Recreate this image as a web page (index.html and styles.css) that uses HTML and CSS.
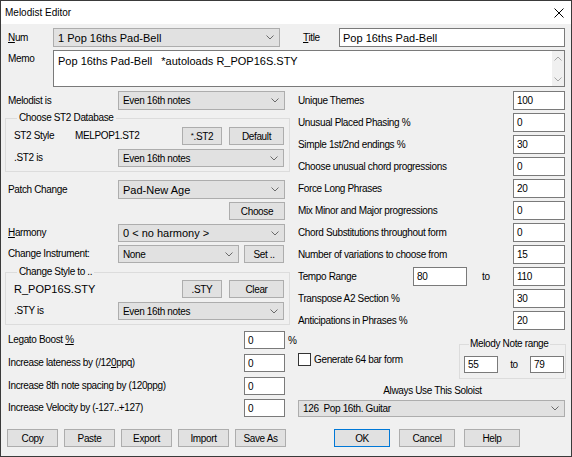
FILE: index.html
```html
<!DOCTYPE html>
<html>
<head>
<meta charset="utf-8">
<link rel="stylesheet" href="styles.css">
</head>
<body>
<div class="window">
  <div class="titlebar">
    <span class="title-text">Melodist Editor</span>
    <svg class="close" width="10" height="10" viewBox="0 0 10 10"><path d="M0.5 0.5 L9.5 9.5 M9.5 0.5 L0.5 9.5" stroke="#000" stroke-width="1" fill="none"/></svg>
  </div>
  <div class="content">
    <div class="row top-row">
      <span class="lbl lbl-num"><u>N</u>um</span>
      <div class="combo w-num big"><span>1 Pop 16ths Pad-Bell</span><svg class="chev" width="8" height="5" viewBox="0 0 8 5"><path d="M0.5 0.5 L4 4 L7.5 0.5" fill="none" stroke="#6a6a6a"/></svg></div>
      <span class="lbl lbl-title"><u>T</u>itle</span>
      <div class="input big grow">Pop 16ths Pad-Bell</div>
    </div>
    <div class="row memo-row">
      <span class="lbl lbl-num lbl-memo">Memo</span>
      <div class="memo big">
        <div class="memo-text">Pop 16ths Pad-Bell &nbsp;&nbsp;*autoloads R_POP16S.STY</div>
        <div class="vscroll">
          <svg width="8" height="5" viewBox="0 0 8 5"><path d="M0.5 4.5 L4 1 L7.5 4.5" fill="none" stroke="#a6a6a6"/></svg>
          <svg width="8" height="5" viewBox="0 0 8 5"><path d="M0.5 0.5 L4 4 L7.5 0.5" fill="none" stroke="#a6a6a6"/></svg>
        </div>
      </div>
    </div>

    <div class="columns">
      <div class="col-left">
        <div class="lrow">
          <span class="lbl lbl-l">Melodist is</span>
          <div class="combo grow"><span>Even 16th notes</span><svg class="chev" width="8" height="5" viewBox="0 0 8 5"><path d="M0.5 0.5 L4 4 L7.5 0.5" fill="none" stroke="#6a6a6a"/></svg></div>
        </div>

        <fieldset class="group g-st2">
          <legend>Choose ST2 Database</legend>
          <div class="grow-row">
            <span class="lbl lbl-st2">ST2 Style</span>
            <span class="lbl lbl-val">MELPOP1.ST2</span>
            <button class="btn b-st2"><sup class="ast">*</sup>.ST2</button>
            <button class="btn b-def">Default</button>
          </div>
          <div class="grow-row r-gap">
            <span class="lbl lbl-g">.ST2 is</span>
            <div class="combo grow"><span>Even 16th notes</span><svg class="chev" width="8" height="5" viewBox="0 0 8 5"><path d="M0.5 0.5 L4 4 L7.5 0.5" fill="none" stroke="#6a6a6a"/></svg></div>
          </div>
        </fieldset>

        <div class="lrow r-patch">
          <span class="lbl lbl-l">Patch Change</span>
          <div class="combo grow big"><span>Pad-New Age</span><svg class="chev" width="8" height="5" viewBox="0 0 8 5"><path d="M0.5 0.5 L4 4 L7.5 0.5" fill="none" stroke="#6a6a6a"/></svg></div>
        </div>
        <div class="lrow r-choose">
          <button class="btn b-choose">Choose</button>
        </div>
        <div class="lrow r-harm">
          <span class="lbl lbl-l"><u>H</u>armony</span>
          <div class="combo grow big"><span>0 &lt; no harmony &gt;</span><svg class="chev" width="8" height="5" viewBox="0 0 8 5"><path d="M0.5 0.5 L4 4 L7.5 0.5" fill="none" stroke="#6a6a6a"/></svg></div>
        </div>
        <div class="lrow r-inst">
          <span class="lbl lbl-l">Change Instrument:</span>
          <div class="combo w-inst"><span>None</span><svg class="chev" width="8" height="5" viewBox="0 0 8 5"><path d="M0.5 0.5 L4 4 L7.5 0.5" fill="none" stroke="#6a6a6a"/></svg></div>
          <button class="btn b-set">Set ..</button>
        </div>

        <fieldset class="group g-sty">
          <legend>Change Style to ..</legend>
          <div class="grow-row">
            <span class="lbl big sty-name">R_POP16S.STY</span>
            <button class="btn b-st2">.STY</button>
            <button class="btn b-def">Clear</button>
          </div>
          <div class="grow-row r-gap">
            <span class="lbl lbl-g">.STY is</span>
            <div class="combo grow"><span>Even 16th notes</span><svg class="chev" width="8" height="5" viewBox="0 0 8 5"><path d="M0.5 0.5 L4 4 L7.5 0.5" fill="none" stroke="#6a6a6a"/></svg></div>
          </div>
        </fieldset>

        <div class="lrow r-legato">
          <span class="lbl grow">Legato Boost <u>%</u></span>
          <div class="input w-small">0</div>
          <span class="pct">%</span>
        </div>
        <div class="lrow r-inc">
          <span class="lbl grow">Increase lateness by (/12<u>0</u>ppq)</span>
          <div class="input w-small">0</div>
        </div>
        <div class="lrow r-inc2">
          <span class="lbl grow">Increase 8th note spacing by (120pp<u>g</u>)</span>
          <div class="input w-small">0</div>
        </div>
        <div class="lrow r-inc3">
          <span class="lbl grow">Increase Velocity by (-127..+127)</span>
          <div class="input w-small">0</div>
        </div>
      </div>

      <div class="col-right">
        <div class="rrow"><span class="lbl grow">Unique Themes</span><div class="input w-r">100</div></div>
        <div class="rrow"><span class="lbl grow">Unusual Placed Phasing %</span><div class="input w-r">0</div></div>
        <div class="rrow"><span class="lbl grow">Simple 1st/2nd endings %</span><div class="input w-r">30</div></div>
        <div class="rrow"><span class="lbl grow">Choose unusual chord progressions</span><div class="input w-r">0</div></div>
        <div class="rrow"><span class="lbl grow">Force Long Phrases</span><div class="input w-r">20</div></div>
        <div class="rrow"><span class="lbl grow">Mix Minor and Major progressions</span><div class="input w-r">0</div></div>
        <div class="rrow"><span class="lbl grow">Chord Substitutions throughout form</span><div class="input w-r">0</div></div>
        <div class="rrow"><span class="lbl grow">Number of variations to choose from</span><div class="input w-r">15</div></div>
        <div class="rrow">
          <span class="lbl lbl-tempo">Tempo Range</span>
          <div class="input w-tempo">80</div>
          <span class="lbl grow to-lbl">to</span>
          <div class="input w-r">110</div>
        </div>
        <div class="rrow"><span class="lbl grow">Transpose A2 Section %</span><div class="input w-r">30</div></div>
        <div class="rrow"><span class="lbl grow">Anticipations in Phrases %</span><div class="input w-r">20</div></div>

        <div class="mid-row">
          <label class="check-wrap">
            <span class="checkbox"></span>
            <span class="lbl">Generate 64 bar form</span>
          </label>
          <fieldset class="group g-range">
            <legend>Melody Note range</legend>
            <div class="range-row">
              <div class="input w-range">55</div>
              <span class="lbl to2">to</span>
              <div class="input w-range">79</div>
            </div>
          </fieldset>
        </div>
        <div class="soloist-lbl">Always Use This Soloist</div>
        <div class="combo soloist"><span>126 &nbsp;Pop 16th. Guitar</span><svg class="chev" width="8" height="5" viewBox="0 0 8 5"><path d="M0.5 0.5 L4 4 L7.5 0.5" fill="none" stroke="#6a6a6a"/></svg></div>
      </div>
    </div>

    <div class="bottom-row">
      <button class="btn b-bot">Copy</button>
      <button class="btn b-bot">Paste</button>
      <button class="btn b-bot">Export</button>
      <button class="btn b-bot">Import</button>
      <button class="btn b-bot">Save As</button>
      <button class="btn b-main b-ok">OK</button>
      <button class="btn b-main">Cancel</button>
      <button class="btn b-main">Help</button>
    </div>
  </div>
</div>
</body>
</html>
```

FILE: styles.css
```css
html, body {
  margin: 0;
  padding: 0;
  background: #f0f0f0;
}

.window {
  width: 572px;
  height: 457px;
  box-sizing: border-box;
  border: 1px solid #3a3a3a;
  background: #f0f0f0;
  font-family: "Liberation Sans", Arial, sans-serif;
  font-size: 10px;
  letter-spacing: -0.35px;
  color: #000;
  overflow: hidden;
}

.titlebar {
  height: 23px;
  background: #fff;
  display: flex;
  align-items: center;
  justify-content: space-between;
  padding: 0 7px 0 4px;
}

.title-text {
  font-size: 10px;
  letter-spacing: 0;
}

.content {
  padding: 4px 6px 0 4px;
}

.row {
  display: flex;
  align-items: center;
}

.top-row {
  height: 19px;
}

.lbl {
  white-space: nowrap;
  line-height: 12px;
}

.lbl u {
  text-decoration: underline;
  text-underline-offset: 1px;
}

.big {
  font-size: 11px;
  letter-spacing: 0;
}

.grow {
  flex: 1 1 auto;
  min-width: 0;
}

.lbl-num {
  width: 45px;
  padding-left: 3px;
  flex: none;
}

.lbl-title {
  margin-left: 23px;
  width: 36px;
  flex: none;
}

.combo {
  box-sizing: border-box;
  height: 19px;
  background: #e1e1e1;
  border: 1px solid #adadad;
  display: flex;
  align-items: center;
  justify-content: space-between;
  padding: 0 5px 0 4px;
  white-space: nowrap;
  flex: none;
}

.combo.grow {
  flex: 1 1 auto;
}

.w-num {
  width: 227px;
}

.input {
  box-sizing: border-box;
  height: 19px;
  background: #fff;
  border: 1px solid #7a7a7a;
  display: flex;
  align-items: center;
  padding: 0 0 0 3px;
  white-space: nowrap;
}

.memo-row {
  margin-top: 3px;
  height: 37px;
  align-items: stretch;
}

.lbl-memo {
  padding-top: 3px;
}

.memo {
  flex: 1 1 auto;
  box-sizing: border-box;
  background: #fff;
  border: 1px solid #7a7a7a;
  display: flex;
  justify-content: space-between;
}

.memo-text {
  padding: 4px 0 0 4px;
  line-height: 13px;
  white-space: nowrap;
}

.vscroll {
  width: 12px;
  background: #f0f0f0;
  display: flex;
  flex-direction: column;
  justify-content: space-between;
  align-items: center;
  padding: 5px 0 4px;
}

.columns {
  display: flex;
  align-items: flex-start;
  margin-top: 4px;
  gap: 8px;
}

.col-left {
  width: 285px;
  flex: none;
}

.col-right {
  flex: 1 1 auto;
}

.lrow {
  display: flex;
  align-items: center;
  height: 19px;
  padding: 0 5px 0 3px;
}

.lbl-l {
  width: 110px;
  flex: none;
}

.group {
  margin: 0;
  padding: 0 5px 4px 8px;
  border: 1px solid #dcdcdc;
  min-width: 0;
}

.group legend {
  padding: 0 2px;
  margin-left: 3px;
  line-height: 12px;
  height: 12px;
}

.g-st2 {
  margin-top: 2px;
  padding-top: 3px;
}

.g-sty {
  margin-top: 3px;
  padding-top: 2px;
}

.grow-row {
  display: flex;
  align-items: center;
  height: 18px;
}

.r-gap {
  margin-top: 4px;
}

.lbl-st2 {
  width: 61px;
  flex: none;
}

.lbl-val {
  flex: 1 1 auto;
}

.lbl-g {
  width: 104px;
  flex: none;
}

.sty-name {
  flex: 1 1 auto;
}

.btn {
  box-sizing: border-box;
  height: 18px;
  background: #e1e1e1;
  border: 1px solid #adadad;
  font-family: "Liberation Sans", Arial, sans-serif;
  font-size: 10px;
  letter-spacing: -0.35px;
  color: #000;
  padding: 0;
  margin: 0;
  flex: none;
}

.ast {
  font-size: 8px;
  vertical-align: 2px;
  line-height: 0;
}

.b-st2 {
  width: 40px;
}

.b-def {
  width: 55px;
  margin-left: 7px;
}

.r-patch {
  margin-top: 8px;
}

.r-choose {
  margin-top: 3px;
  height: 18px;
  justify-content: flex-end;
}

.b-choose {
  width: 56px;
}

.r-harm {
  margin-top: 4px;
  height: 18px;
}

.r-harm .combo {
  height: 18px;
}

.r-inst {
  margin-top: 3px;
  height: 18px;
}

.r-inst .combo {
  height: 18px;
}

.w-inst {
  width: 121px;
}

.b-set {
  width: 40px;
  margin-left: 5px;
}

.g-sty .combo,
.g-st2 .combo {
  height: 18px;
}

.r-legato {
  margin-top: 6px;
  height: 18px;
}

.r-inc {
  margin-top: 5px;
  height: 18px;
}

.r-inc2 {
  margin-top: 5px;
  height: 18px;
}

.r-inc3 {
  margin-top: 4px;
  height: 18px;
}

.w-small {
  width: 41px;
  height: 18px;
  flex: none;
}

.pct {
  width: 5px;
  margin-left: 3px;
  margin-right: -8px;
  flex: none;
}

.rrow {
  display: flex;
  align-items: center;
  height: 19px;
  margin-bottom: 3px;
}

.w-r {
  width: 52px;
  flex: none;
}

.lbl-tempo {
  width: 115px;
  flex: none;
}

.w-tempo {
  width: 54px;
  flex: none;
}

.to-lbl {
  padding-left: 15px;
}

.mid-row {
  display: flex;
  align-items: flex-start;
  justify-content: space-between;
  margin-top: 8px;
}

.check-wrap {
  display: flex;
  align-items: center;
  margin-top: 15px;
}

.checkbox {
  width: 13px;
  height: 13px;
  box-sizing: border-box;
  background: #fff;
  border: 1px solid #333;
  margin-right: 3px;
}

.g-range {
  padding: 6px 1px 5px 4px;
  margin-right: -1px;
  width: 107px;
  box-sizing: border-box;
}

.g-range legend {
  margin-left: 5px;
  padding: 0 1px;
}

.range-row {
  display: flex;
  align-items: center;
  justify-content: space-between;
  padding-right: 0;
}

.w-range {
  width: 34px;
  height: 17px;
}

.soloist-lbl {
  text-align: center;
  margin-top: 6px;
  line-height: 12px;
  padding-left: 2px;
}

.soloist {
  margin-top: 3px;
  height: 17px;
}

.bottom-row {
  display: flex;
  align-items: center;
  margin-top: 12px;
  padding-left: 2px;
}

.b-bot {
  width: 51px;
  margin-right: 6px;
}

.b-bot:nth-child(5) {
  margin-right: 48px;
}

.b-main {
  width: 56px;
  margin-right: 9px;
}

.b-ok {
  border: 1px solid #0078d7;
}
```
